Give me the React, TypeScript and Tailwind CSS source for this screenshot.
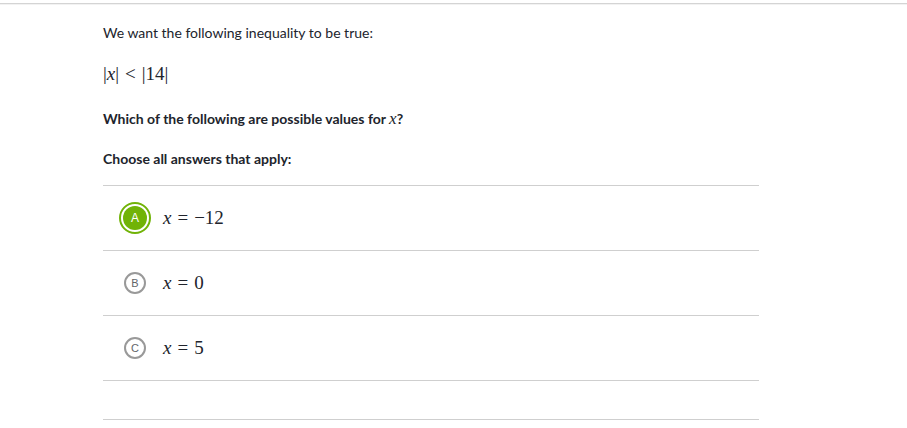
import React from "react";

const serif = { fontFamily: '"Liberation Serif", "DejaVu Serif", serif' };

function Rel({ children }: { children: React.ReactNode }) {
  return <span className="mx-[6px]">{children}</span>;
}

function Choice({ letter, selected, children }: { letter: string; selected?: boolean; children: React.ReactNode }) {
  return (
    <div className="flex h-[65px] items-center border-b border-[#cfcfcf] pl-[16px]">
      <div className="flex w-[32px] items-center justify-center">
        {selected ? (
          <div className="flex h-[32px] w-[32px] items-center justify-center rounded-full border-2 border-[#71b307] bg-white">
            <div className="flex h-[24px] w-[24px] items-center justify-center rounded-full bg-[#71b307] text-[12px] font-normal text-white" style={{ fontFamily: '"Liberation Sans", Arial, sans-serif' }}>
              {letter}
            </div>
          </div>
        ) : (
          <div className="flex h-[22px] w-[22px] items-center justify-center rounded-full border-2 border-[#999999] text-[11px] text-[#626569]" style={{ fontFamily: '"Liberation Sans", Arial, sans-serif' }}>
            {letter}
          </div>
        )}
      </div>
      <div className="ml-[12px] text-[19px] leading-[24px] text-[#21242c]" style={serif}>
        {children}
      </div>
    </div>
  );
}

export default function App() {
  return (
    <div className="h-[428px] w-[907px] bg-white text-[#21242c]" style={{ fontFamily: 'Lato, "Open Sans", sans-serif' }}>
      <div className="h-[3px]" />
      <div className="h-[1px] bg-[#d4d4d4]" />
      <div className="h-[1px] bg-[#f2f2f2]" />
      <div className="ml-[103px] w-[656px]">
        <div className="pt-[18px] text-[14px] leading-[20px]">We want the following inequality to be true:</div>
        <div className="mt-[20px] text-[19px] leading-[22px] text-[#21242c]" style={serif}>
          |<i>x</i>|<Rel>&lt;</Rel>|14|
        </div>
        <div className="mt-[24px] text-[14px] font-bold leading-[20px]">
          Which of the following are possible values for <i className="font-normal text-[17px]" style={serif}>x</i>?
        </div>
        <div className="mt-[20px] text-[14px] font-bold leading-[20px]">Choose all answers that apply:</div>
        <div className="mt-[16px] border-b border-[#cfcfcf]" />
        <Choice letter="A" selected>
          <i>x</i><Rel>=</Rel>−12
        </Choice>
        <Choice letter="B">
          <i>x</i><Rel>=</Rel>0
        </Choice>
        <Choice letter="C">
          <i>x</i><Rel>=</Rel>5
        </Choice>
        <div className="h-[39px] border-b border-[#cfcfcf]" />
      </div>
    </div>
  );
}
